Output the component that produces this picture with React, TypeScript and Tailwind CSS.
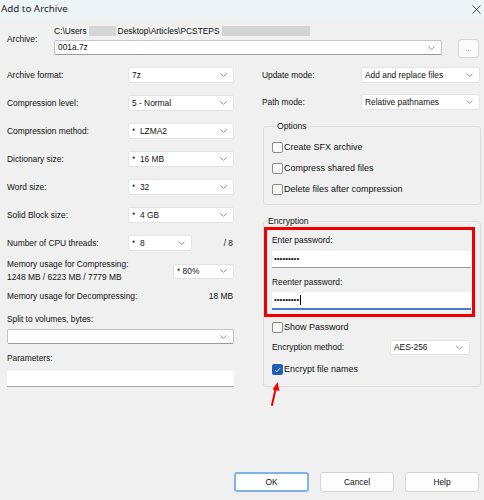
import React from "react";

const F = { fontFamily: '"Liberation Sans", Arial, sans-serif' } as React.CSSProperties;

function Chevron() {
  return (
    <svg width="7" height="4" viewBox="0 0 7 4" className="shrink-0">
      <path d="M0.5 0.5 L3.5 3.3 L6.5 0.5" fill="none" stroke="#8a8a8a" strokeWidth="0.9" />
    </svg>
  );
}

function Combo({ text, w, h = "h-[16px]", dark = false }: { text: string; w: string; h?: string; dark?: boolean }) {
  return (
    <div
      className={`${w} ${h} shrink-0 flex items-center justify-between pl-[3px] pr-[6px] bg-white rounded-[2px] border ${
        dark ? "border-[#c4c4c4] border-b-[#9a9a9a]" : "border-[#e3e3e3]"
      }`}
    >
      <span className="whitespace-pre leading-none">{text}</span>
      <Chevron />
    </div>
  );
}

function Check({ checked = false, label }: { checked?: boolean; label: string }) {
  return (
    <div className="h-[15px] flex items-center gap-[1px]">
      {checked ? (
        <div className="w-[11px] h-[11px] rounded-[2px] bg-[#1f5fb8] flex items-center justify-center">
          <svg width="7" height="6" viewBox="0 0 7 6">
            <path d="M1 3.2 L2.8 4.8 L6 1.2" fill="none" stroke="white" strokeWidth="0.9" />
          </svg>
        </div>
      ) : (
        <div className="w-[11px] h-[11px] rounded-[2px] border border-[#8c8c8c] bg-[#f7f7f7]" />
      )}
      <span className="leading-none text-[9px]">{label}</span>
    </div>
  );
}

function Row({ label, lw, children }: { label: string; lw: string; children: React.ReactNode }) {
  return (
    <div className="h-[16px] flex items-center">
      <span className={`${lw} shrink-0 leading-none`}>{label}</span>
      {children}
    </div>
  );
}

export default function App() {
  return (
    <div
      style={F}
      className="relative w-[484px] h-[500px] overflow-hidden bg-[#f0f0f0] text-[8.4px] text-[#111] flex flex-col"
    >
      {/* Title bar */}
      <div className="h-[18px] shrink-0 bg-[#eef5f8] flex items-center justify-between pl-[1px] pr-[3px]">
        <span className="text-[9.8px] leading-none text-[#222]" style={{ fontFamily: '"Noto Sans", "Liberation Sans", sans-serif' }}>
          Add to Archive
        </span>
        <svg width="9" height="9" viewBox="0 0 9 9">
          <path d="M0.5 0.5 L8.5 8.5 M8.5 0.5 L0.5 8.5" stroke="#333" strokeWidth="0.9" />
        </svg>
      </div>

      {/* Archive */}
      <div className="flex items-start pl-[7px]">
        <span className="w-[47px] shrink-0 pt-[15px] leading-[12px]">Archive:</span>
        <div className="w-[388px] shrink-0 flex flex-col">
          <div className="mt-[7px] h-[12px] flex items-center leading-none">
            <span>C:\Users</span>
            <span className="inline-block w-[27px] h-[10px] bg-[#d6d6d6] mx-[2px]" />
            <span>Desktop\Articles\PCSTEPS</span>
            <span className="inline-block w-[88px] h-[10px] bg-[#d4d4d4] ml-[2px]" />
          </div>
          <div className="mt-[3px]">
            <Combo text="001a.7z" w="w-[388px]" h="h-[15px]" dark />
          </div>
        </div>
        <div className="ml-[16px] mt-[21px] w-[21px] h-[19px] rounded-[3px] border border-[#d6d6d6] bg-[#fbfbfb] flex items-center justify-center text-[7px] text-[#666] leading-none">
          ...
        </div>
      </div>

      {/* Columns */}
      <div className="flex pl-[7px] mt-[9px]">
        {/* Left */}
        <div className="w-[227px] shrink-0 flex flex-col">
          <div className="flex flex-col gap-[12px]">
            <Row label="Archive format:" lw="w-[121px]">
              <Combo text="7z" w="w-[106px]" />
            </Row>
            <Row label="Compression level:" lw="w-[121px]">
              <Combo text="5 - Normal" w="w-[106px]" />
            </Row>
            <Row label="Compression method:" lw="w-[121px]">
              <Combo text="*  LZMA2" w="w-[106px]" />
            </Row>
            <Row label="Dictionary size:" lw="w-[121px]">
              <Combo text="*  16 MB" w="w-[106px]" />
            </Row>
            <Row label="Word size:" lw="w-[121px]">
              <Combo text="*  32" w="w-[106px]" />
            </Row>
            <Row label="Solid Block size:" lw="w-[121px]">
              <Combo text="*  4 GB" w="w-[106px]" />
            </Row>
            <Row label="Number of CPU threads:" lw="w-[121px]">
              <Combo text="*  8" w="w-[64px]" />
              <span className="flex-1 text-right leading-none pr-[1px]">/ 8</span>
            </Row>
          </div>

          <div className="mt-[7px] flex items-center">
            <div className="flex flex-col leading-[13px]">
              <span>Memory usage for Compressing:</span>
              <span>1248 MB / 6223 MB / 7779 MB</span>
            </div>
            <div className="ml-auto">
              <Combo text="* 80%" w="w-[61px]" h="h-[15px]" />
            </div>
          </div>

          <div className="mt-[6px] flex justify-between leading-[13px]">
            <span>Memory usage for Decompressing:</span>
            <span className="pr-[1px]">18 MB</span>
          </div>

          <span className="mt-[10px] leading-[13px]">Split to volumes, bytes:</span>
          <div className="mt-[3px]">
            <Combo text="" w="w-[227px]" h="h-[15px]" dark />
          </div>

          <span className="mt-[8px] leading-[13px]">Parameters:</span>
          <div className="mt-[6px] h-[16px] w-[227px] bg-white border-b border-[#a8a8a8]" />
        </div>

        {/* Right */}
        <div className="ml-[28px] w-[219px] shrink-0 flex flex-col">
          <div className="flex flex-col gap-[11px]">
            <Row label="Update mode:" lw="w-[99px]">
              <Combo text="Add and replace files" w="w-[119px]" />
            </Row>
            <Row label="Path mode:" lw="w-[99px]">
              <Combo text="Relative pathnames" w="w-[119px]" />
            </Row>
          </div>

          <fieldset className="mt-[10px] ml-[1px] w-[218px] border border-[#dcdcdc] rounded-[3px] pl-[8px] pb-[7px]">
            <legend className="ml-[4px] px-[1px] leading-[13px] text-[8.6px]">Options</legend>
            <div className="mt-[7px] flex flex-col gap-[6px]">
              <Check label="Create SFX archive" />
              <Check label="Compress shared files" />
              <Check label="Delete files after compression" />
            </div>
          </fieldset>

          <fieldset className="mt-[10px] ml-[1px] w-[218px] border border-[#dcdcdc] rounded-[3px] pb-[9px]">
            <legend className="ml-[3px] px-[1px] leading-[12px] text-[8.6px]">Encryption</legend>
            <div className="w-[211px] border-[3px] border-[#f00000] pl-[5px] pr-[1px] pt-[4px] pb-[4px] flex flex-col">
              <span className="leading-[12px]">Enter password:</span>
              <div className="mt-[5px] h-[17px] bg-white border-b border-[#9c9c9c] flex items-center pl-[2px]">
                <span className="text-[8px] leading-none">•••••••••</span>
              </div>
              <span className="mt-[8px] leading-[12px]">Reenter password:</span>
              <div className="mt-[4px] h-[18px] bg-white border-b-2 border-[#3f7fc8] flex items-center pl-[2px]">
                <span className="text-[8px] leading-none">•••••••••</span>
                <span className="ml-[1px] w-[1px] h-[10px] bg-black" />
              </div>
            </div>
            <div className="ml-[8px] mt-[3px]">
              <Check label="Show Password" />
            </div>
            <div className="ml-[8px] mt-[5px] h-[15px] flex items-center">
              <span className="w-[118px] shrink-0 leading-none">Encryption method:</span>
              <Combo text="AES-256" w="w-[80px]" h="h-[15px]" />
            </div>
            <div className="ml-[8px] mt-[7px]">
              <Check checked label="Encrypt file names" />
            </div>
          </fieldset>
        </div>
      </div>

      {/* Buttons */}
      <div className="mt-auto pb-[8px] pr-[5px] flex justify-end gap-[11px]">
        <div className="w-[75px] h-[20px] rounded-[3px] border-2 border-[#7fb4e8] bg-[#fdfdfd] flex items-center justify-center leading-none">
          OK
        </div>
        <div className="w-[74px] h-[20px] rounded-[3px] border border-[#d4d4d4] bg-[#fdfdfd] flex items-center justify-center leading-none">
          Cancel
        </div>
        <div className="w-[74px] h-[20px] rounded-[3px] border border-[#d4d4d4] bg-[#fdfdfd] flex items-center justify-center leading-none">
          Help
        </div>
      </div>

      {/* Red annotation arrow */}
      <svg className="absolute left-[264px] top-[378px]" width="20" height="32" viewBox="0 0 20 32">
        <path d="M8 27 L11.6 11" stroke="#f00000" strokeWidth="2" strokeLinecap="round" />
        <path d="M13.5 4 L15.5 13 L8.6 11.6 Z" fill="#f00000" />
      </svg>
    </div>
  );
}
